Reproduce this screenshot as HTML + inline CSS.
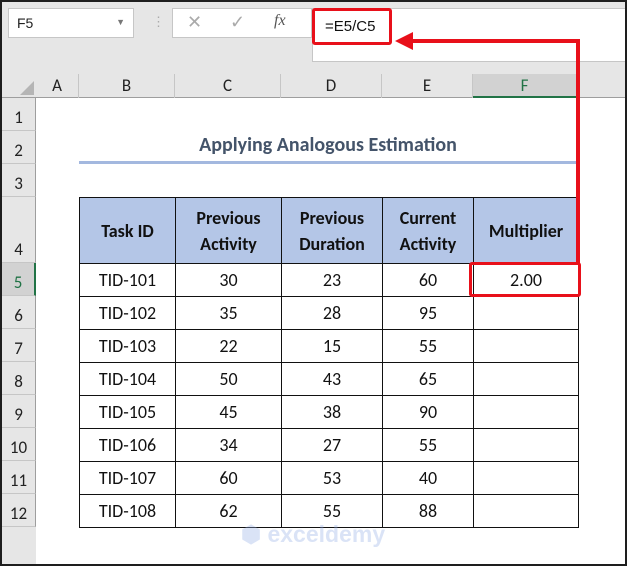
<!DOCTYPE html><html><head><style>
body{margin:0;width:627px;height:566px;overflow:hidden;background:#1e1e1e;font-family:"Liberation Sans",Calibri,sans-serif}
#w{position:absolute;left:2px;top:2px;width:623px;height:562px;background:#e6e6e6;overflow:hidden}
.a{position:absolute;box-sizing:border-box}
.t{font-family:"Carlito","Liberation Sans",sans-serif}
</style></head><body><div id="w">
<div class="a" style="left:6px;top:6px;width:126px;height:30px;background:#fff;border:1px solid #c6c6c6;font-size:14px;padding:6px 8px;color:#222">F5<span style="position:absolute;right:8px;top:8px;font-size:9px;color:#777">▼</span></div>
<div class="a" style="left:150px;top:12px;color:#aaa;font-size:13px">⋮</div>
<div class="a" style="left:170px;top:6px;width:140px;height:30px;background:#fff;border:1px solid #c6c6c6;color:#aaa;font-size:18px">
<span style="position:absolute;left:14px;top:3px">✕</span><span style="position:absolute;left:57px;top:3px">✓</span><span style="position:absolute;left:101px;top:3px;font-family:'Liberation Serif';font-style:italic;color:#555;font-size:16px">fx</span></div>
<div class="a" style="left:310px;top:6px;width:313px;height:54px;background:#fff;border:1px solid #c6c6c6;border-right:none"></div>
<div class="a" style="left:310px;top:6px;width:80px;height:37px;border:3px solid #e8101a;border-radius:3px;font-size:15px;padding:7px 0 0 10px;color:#111">=E5/C5</div>
<!-- col headers -->
<div class="a" style="left:0;top:72px;width:623px;height:24px;background:#e6e6e6;border-bottom:1px solid #9e9e9e"></div>
<div class="a" style="left:18px;top:79px;width:0;height:0;border-left:14px solid transparent;border-bottom:14px solid #b5b5b5"></div>
<div id="ch"></div>
<div class="a" style="left:34px;top:96px;width:589px;height:470px;background:#fff"></div>
<div class="a" style="left:77px;top:159px;width:498px;height:3px;background:#a3b8df"></div>
<div class="a t" style="left:77px;top:131px;width:498px;text-align:center;font-weight:bold;font-size:20px;color:#44546a">Applying Analogous Estimation</div>
<div id="tb"></div>
<div class="a" style="left:239px;top:519px;width:150px;font-size:23px;font-weight:bold;color:rgba(150,175,230,.35)">&#11042; exceldemy</div>
<div class="a" style="left:467px;top:260px;width:112px;height:35px;border:3.5px solid #e8101a;border-radius:3px"></div>
<!-- arrow -->
<div class="a" style="left:406px;top:37px;width:172px;height:4px;background:#e8101a"></div>
<div class="a" style="left:574px;top:37px;width:4px;height:225px;background:#e8101a"></div>
<div class="a" style="left:393px;top:30px;width:0;height:0;border-top:9px solid transparent;border-bottom:9px solid transparent;border-right:18px solid #e8101a"></div>
</div>
<script>
var cols=[[34,77,'A'],[77,173,'B'],[173,279,'C'],[279,380,'D'],[380,471,'E'],[471,575,'F']],h='';
cols.forEach(c=>{var f=c[2]=='F';h+=`<div class="a t" style="left:${c[0]}px;top:72px;width:${c[1]-c[0]}px;height:24px;border-right:1px solid #c6c6c6;text-align:center;font-size:17px;line-height:24px;color:${f?'#217346':'#222'};${f?'background:#d2d2d2;border-bottom:2px solid #217346':''}">${c[2]}</div>`});
var rows=[96,129,162,195,261,294,327,360,393,426,459,492,525];
for(var i=0;i<12;i++){var f=i==4;h+=`<div class="a t" style="left:0;top:${rows[i]}px;width:34px;height:${rows[i+1]-rows[i]}px;border-bottom:1px solid #c6c6c6;border-right:1px solid #9e9e9e;text-align:center;font-size:17px;padding-top:${rows[i+1]-rows[i]-24}px;color:${f?'#217346':'#222'};${f?'background:#d2d2d2;border-right:2px solid #217346':''}">${i+1}</div>`}
document.getElementById('ch').innerHTML=h;
var d=[['30','23','60','2.00'],['35','28','95',''],['22','15','55',''],['50','43','65',''],['45','38','90',''],['34','27','55',''],['60','53','40',''],['62','55','88','']];
var t='<table class="t" style="position:absolute;left:77px;top:195px;width:499px;table-layout:fixed;border-collapse:collapse;font-size:18px;color:#111">';
t+='<colgroup><col style="width:96px"><col style="width:106px"><col style="width:101px"><col style="width:91px"><col style="width:105px"></colgroup>';
t+='<tr style="height:66px;background:#b4c6e7;font-weight:bold">';
['Task ID','Previous<br>Activity','Previous<br>Duration','Current<br>Activity','Multiplier'].forEach((x,j)=>t+=`<td style="border:1.5px solid #111;text-align:center;padding:0;line-height:26px">${x}</td>`);
t+='</tr>';
d.forEach((r,i)=>{t+='<tr style="height:33px">';['TID-10'+(i+1)].concat(r).forEach(x=>t+=`<td style="border:1.5px solid #111;text-align:center;padding:0">${x}</td>`);t+='</tr>'});
document.getElementById('tb').innerHTML=t+'</table>';
</script></body></html>
